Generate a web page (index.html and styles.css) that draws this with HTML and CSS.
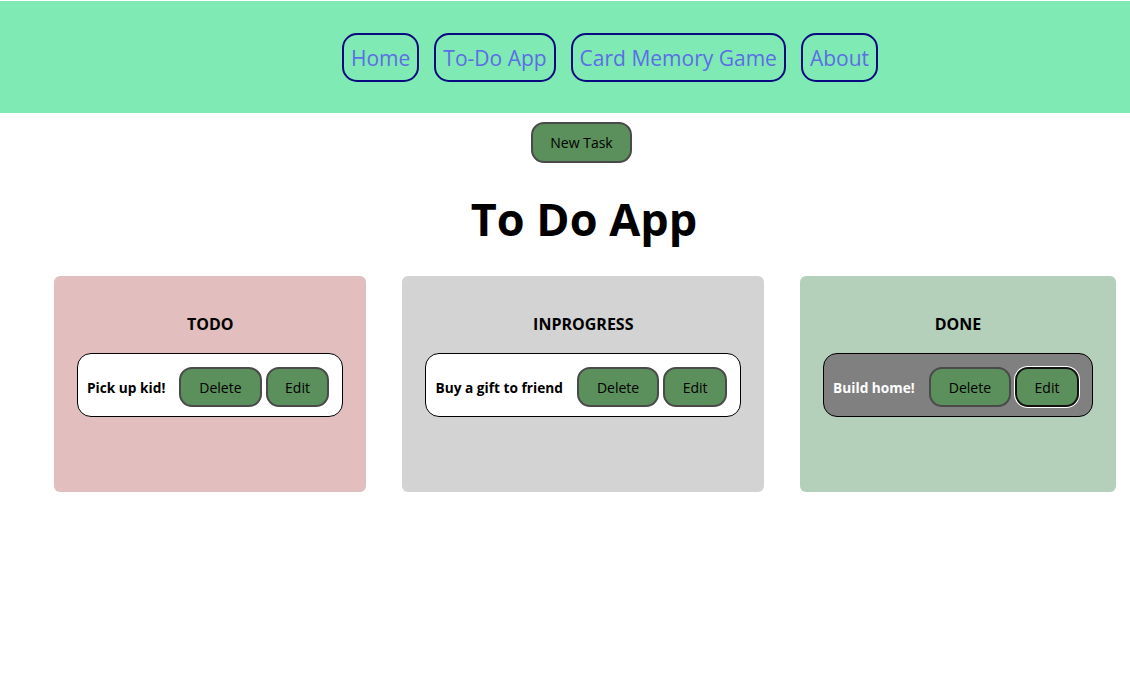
FILE: index.html
```html
<!DOCTYPE html>
<html lang="en">
<head>
<meta charset="utf-8">
<title>To Do App</title>
<link rel="stylesheet" href="styles.css">
</head>
<body>
<header class="topbar">
  <nav class="nav">
    <a class="nav-link" href="#">Home</a>
    <a class="nav-link" href="#">To-Do App</a>
    <a class="nav-link" href="#">Card Memory Game</a>
    <a class="nav-link" href="#">About</a>
  </nav>
</header>
<main class="main">
  <div class="new-row"><button class="btn btn-new">New Task</button></div>
  <h1 class="title">To Do App</h1>
  <section class="board">
    <div class="column col-todo">
      <h3 class="col-title">TODO</h3>
      <div class="task">
        <span class="task-text">Pick up kid!</span>
        <button class="btn btn-delete">Delete</button>
        <button class="btn btn-edit">Edit</button>
      </div>
    </div>
    <div class="column col-progress">
      <h3 class="col-title">INPROGRESS</h3>
      <div class="task">
        <span class="task-text">Buy a gift to friend</span>
        <button class="btn btn-delete">Delete</button>
        <button class="btn btn-edit">Edit</button>
      </div>
    </div>
    <div class="column col-done">
      <h3 class="col-title">DONE</h3>
      <div class="task task-done">
        <span class="task-text">Build home!</span>
        <button class="btn btn-delete">Delete</button>
        <button class="btn btn-edit btn-focus">Edit</button>
      </div>
    </div>
  </section>
</main>
</body>
</html>
```
FILE: styles.css
```css
html, body {
  margin: 0;
  padding: 0;
  background: #ffffff;
}
body {
  font-family: "Open Sans", "Noto Sans", sans-serif;
  color: #000;
}
.topbar {
  margin-top: 1px;
  height: 112px;
  background: #7feab3;
  display: flex;
  align-items: center;
  justify-content: center;
}
.nav {
  display: flex;
  gap: 15px;
  margin-left: 90px;
  margin-top: 1px;
}
.nav-link {
  display: flex;
  align-items: center;
  height: 49px;
  box-sizing: border-box;
  padding: 0 7px;
  border: 2px solid #0a0a80;
  border-radius: 15px;
  color: #5b6ee6;
  text-decoration: none;
  font-size: 21px;
}
.main {
  display: flex;
  flex-direction: column;
}
.new-row {
  display: flex;
  justify-content: center;
  padding-left: 33px;
  margin-top: 9px;
}
.btn {
  font-family: inherit;
  background: #5b8f5b;
  border: 2px solid #4a4a4a;
  border-radius: 13px;
  color: #000;
  font-size: 14px;
  height: 40px;
  box-sizing: border-box;
  cursor: pointer;
}
.btn-new {
  height: 41px;
  padding: 0 17px;
}
.title {
  margin: 28px 0 0 38px;
  text-align: center;
  font-size: 45px;
  line-height: 56px;
  font-weight: 700;
}
.board {
  display: flex;
  gap: 36px;
  margin: 29px 0 0 54px;
  align-items: flex-start;
}
.column {
  box-sizing: border-box;
  height: 216px;
  padding: 38px 23px 0 23px;
  border-radius: 6px;
}
.col-todo { background: #e2bebe; }
.col-progress { background: #d3d3d3; }
.col-done { background: #b5d0ba; }
.col-title {
  margin: 0 0 19px;
  text-align: center;
  font-size: 16px;
  line-height: 20px;
  font-weight: 700;
}
.task {
  display: flex;
  align-items: center;
  height: 64px;
  box-sizing: border-box;
  padding: 4px 13px 0 9px;
  border: 1px solid #000;
  border-radius: 14px;
  background: #fff;
}
.task-text {
  font-size: 13.7px;
  font-weight: 700;
  margin-right: 14px;
  margin-top: 1px;
}
.task-done {
  background: #808080;
}
.task-done .task-text {
  color: #fff;
}
.btn-delete {
  padding: 0 18px;
}
.btn-edit {
  margin-left: 4px;
  padding: 0 17.5px;
}
.btn-focus {
  border-color: #111;
  box-shadow: 0 0 0 1px #fff;
}
```
